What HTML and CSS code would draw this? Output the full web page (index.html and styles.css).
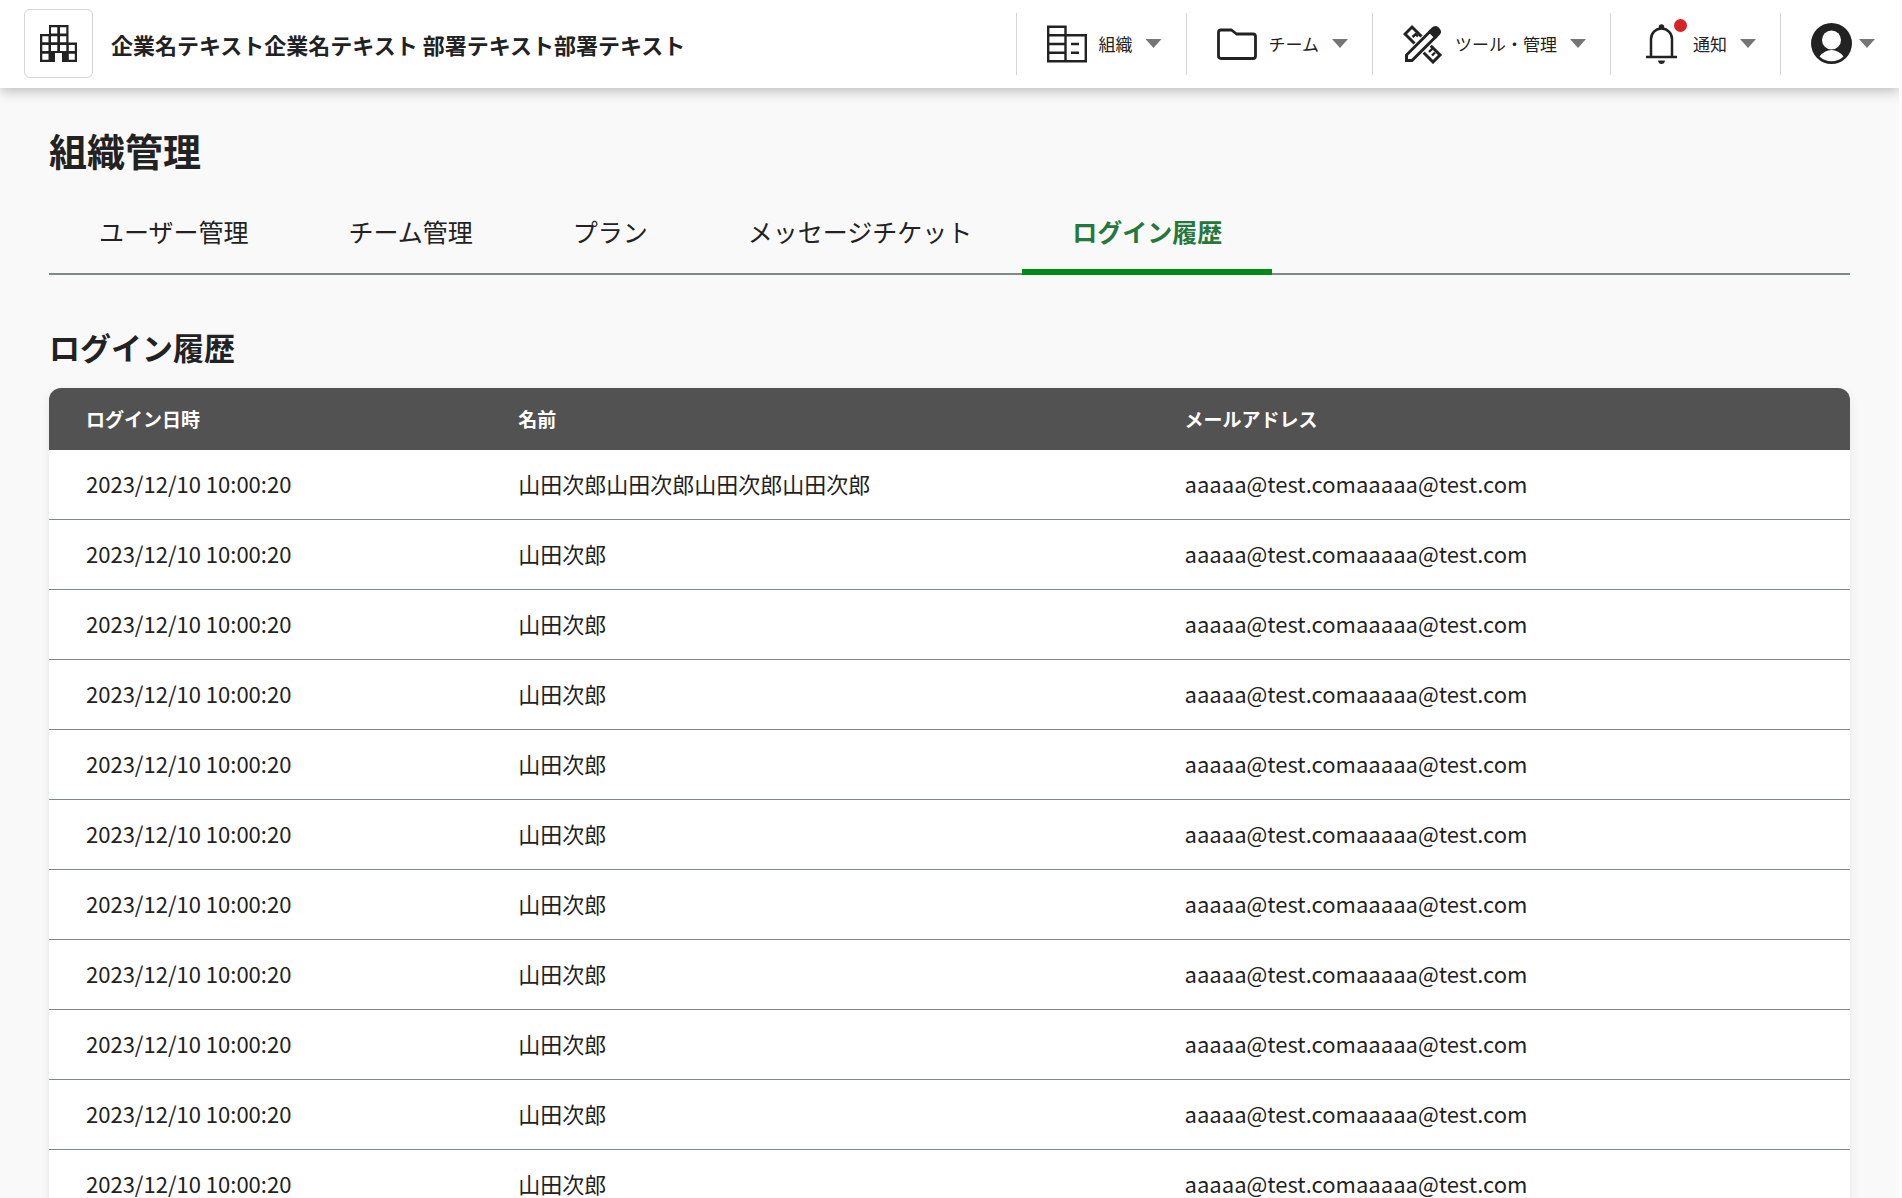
FILE: index.html
```html
<!DOCTYPE html>
<html lang="ja">
<head>
<meta charset="utf-8">
<meta name="viewport" content="width=device-width, initial-scale=1">
<title>組織管理 - ログイン履歴</title>
<link rel="stylesheet" href="styles.css">
</head>
<body>
<div class="page">
  <header class="header">
    <a class="logo" href="#" aria-label="ホーム">
      <svg width="37" height="37" viewBox="0 0 37 37" aria-hidden="true"><path fill="#222" fill-rule="evenodd" d="M9 0H28.5V17.5H37V37H22V28H15V37H0V9H9ZM11 2.3V8.5H17.3V2.3ZM20 2.3V8.5H26.3V2.3ZM2.3 11.2V17.3H8.5V11.2ZM11 11.2V17.3H17.3V11.2ZM20 11.2V17.3H26.3V11.2ZM2.3 20V26H8.5V20ZM11 20V26H17.3V20ZM20 20V26H26.3V20ZM28.8 20V26H34.8V20ZM2.3 28.7V34.7H8.5V28.7ZM28.8 28.7V34.7H34.8V28.7Z"/></svg>
    </a>
    <p class="company">企業名テキスト企業名テキスト 部署テキスト部署テキスト</p>
    <nav class="nav" aria-label="メインメニュー">
      <button class="nav-item" type="button">
        <svg class="nav-icon" viewBox="0 0 40 40" aria-hidden="true"><g fill="none" stroke="#222" stroke-width="2.4"><path d="M1.2 2.7H18.5V37.3H1.2ZM18.5 11.3H38.8V37.3H18.5M1.2 11.3H18.5M1.2 20H18.5M1.2 28.7H18.5M24 20H32M24 28.7H32"/></g></svg>
        <span class="nav-label">組織</span>
        <span class="caret"></span>
      </button>
      <button class="nav-item" type="button">
        <svg class="nav-icon" viewBox="0 0 40 40" aria-hidden="true"><path fill="none" stroke="#222" stroke-width="2.8" stroke-linejoin="round" d="M4 6H14.500L19.500 10H36Q38.500 10 38.500 12.500V32Q38.500 34.500 36 34.500H4Q1.500 34.500 1.500 32V8.500Q1.500 6 4 6Z"/></svg>
        <span class="nav-label">チーム</span>
        <span class="caret"></span>
      </button>
      <button class="nav-item" type="button">
        <svg class="nav-icon" viewBox="0 0 40 40" aria-hidden="true"><g stroke="#222" stroke-width="3"><path fill="#fff" d="M9 3L37 31L30 38L2 10Z"/><path fill="none" stroke-width="2.400" d="M9.500 13L13.500 9.500M12 9.500L15 12.500M26 28L30 24M29 31.500L32 28.500"/><path fill="#fff" stroke="#fff" stroke-width="5" d="M3.500 36.500V31L29 5.500L35 11L9 36.500Z"/><path fill="#fff" d="M3.500 36.500V31L27 7.500L32.500 13L9 36.500Z"/><path fill="#222" stroke-linejoin="round" d="M27 7.500L30 4.500Q32 2.500 34.500 4.500L35.500 5.500Q37.500 8 35.500 10L32.500 13Z"/></g></svg>
        <span class="nav-label">ツール・管理</span>
        <span class="caret"></span>
      </button>
      <button class="nav-item" type="button">
        <span class="bell">
          <svg class="nav-icon" viewBox="0 0 40 40" aria-hidden="true"><path fill="none" stroke="#222" stroke-width="2.500" d="M5 33H36M10 33V15A10.500 10.500 0 0 1 31 15V33"/><path fill="#222" d="M17.800 5V3A2.700 2.700 0 0 1 23.200 3V5ZM17 36.500H24Q23.500 40 20.500 40Q17.500 40 17 36.500Z"/></svg>
          <span class="badge"></span>
        </span>
        <span class="nav-label">通知</span>
        <span class="caret"></span>
      </button>
      <button class="nav-item nav-item-account" type="button" aria-label="アカウント">
        <svg class="account-icon" viewBox="0 0 41 41" aria-hidden="true"><circle cx="20.500" cy="20.500" r="20.500" fill="#222"/><circle cx="20.500" cy="17" r="9.500" fill="#fff"/><path fill="#fff" d="M8.500 33.500Q13.500 27 20.500 27T32.500 33.500Q27.500 38.200 20.500 38.200T8.500 33.500Z"/></svg>
        <span class="caret"></span>
      </button>
    </nav>
  </header>

  <main class="main">
    <h1 class="page-title">組織管理</h1>
    <nav class="tabs" aria-label="組織管理メニュー">
      <a class="tab" href="#">ユーザー管理</a>
      <a class="tab" href="#">チーム管理</a>
      <a class="tab" href="#">プラン</a>
      <a class="tab" href="#">メッセージチケット</a>
      <a class="tab tab-active" href="#" aria-current="page">ログイン履歴</a>
    </nav>

    <h2 class="section-title">ログイン履歴</h2>
    <table class="history">
      <thead>
        <tr><th class="col-date" scope="col">ログイン日時</th><th class="col-name" scope="col">名前</th><th scope="col">メールアドレス</th></tr>
      </thead>
      <tbody>
        <tr><td>2023/12/10 10:00:20</td><td>山田次郎山田次郎山田次郎山田次郎</td><td>aaaaa@test.comaaaaa@test.com</td></tr>
        <tr><td>2023/12/10 10:00:20</td><td>山田次郎</td><td>aaaaa@test.comaaaaa@test.com</td></tr>
        <tr><td>2023/12/10 10:00:20</td><td>山田次郎</td><td>aaaaa@test.comaaaaa@test.com</td></tr>
        <tr><td>2023/12/10 10:00:20</td><td>山田次郎</td><td>aaaaa@test.comaaaaa@test.com</td></tr>
        <tr><td>2023/12/10 10:00:20</td><td>山田次郎</td><td>aaaaa@test.comaaaaa@test.com</td></tr>
        <tr><td>2023/12/10 10:00:20</td><td>山田次郎</td><td>aaaaa@test.comaaaaa@test.com</td></tr>
        <tr><td>2023/12/10 10:00:20</td><td>山田次郎</td><td>aaaaa@test.comaaaaa@test.com</td></tr>
        <tr><td>2023/12/10 10:00:20</td><td>山田次郎</td><td>aaaaa@test.comaaaaa@test.com</td></tr>
        <tr><td>2023/12/10 10:00:20</td><td>山田次郎</td><td>aaaaa@test.comaaaaa@test.com</td></tr>
        <tr><td>2023/12/10 10:00:20</td><td>山田次郎</td><td>aaaaa@test.comaaaaa@test.com</td></tr>
        <tr><td>2023/12/10 10:00:20</td><td>山田次郎</td><td>aaaaa@test.comaaaaa@test.com</td></tr>
      </tbody>
    </table>
  </main>
</div>
</body>
</html>
```

FILE: styles.css
```css
* {
  box-sizing: border-box;
}

html {
  background: #fcfcfc;
  scrollbar-width: none;
}

body {
  margin: 0 3px 0 0;
  color: #222;
  font-family: "Noto Sans CJK JP", sans-serif;
}

.page {
  overflow: hidden;
  background: #f9f9f9;
}

/* Header */
.header {
  display: flex;
  align-items: center;
  height: 88px;
  padding: 0 0 1px 24px;
  background: #fff;
  box-shadow: 0 3px 12px rgba(0, 0, 0, 0.25);
}

.logo {
  display: flex;
  align-items: center;
  justify-content: center;
  width: 69px;
  height: 69px;
  border: 1px solid #d6d6d6;
  border-radius: 6px;
}

.company {
  margin: 0 0 0 18px;
  font-size: 22px;
  font-weight: 700;
  line-height: 32px;
}

.nav {
  display: flex;
  margin-left: auto;
}

.nav-item {
  display: flex;
  align-items: center;
  height: 62px;
  padding: 0 24px 0 30px;
  border: 0;
  border-left: 1px solid #d6d6d6;
  background: none;
  color: inherit;
  font: inherit;
  cursor: pointer;
}

.nav-icon {
  display: block;
  width: 40px;
  height: 40px;
}

.nav-label {
  margin: 0 13px 0 12px;
  font-size: 17px;
  line-height: 24px;
}

.caret {
  width: 16px;
  height: 9px;
  background: #757575;
  clip-path: polygon(0 0, 100% 0, 50% 100%);
}

.bell {
  position: relative;
}

.badge {
  position: absolute;
  top: -5px;
  right: -6px;
  width: 13px;
  height: 13px;
  border-radius: 50%;
  background: #d92323;
}

.account-icon {
  width: 41px;
  height: 41px;
  margin-right: 7px;
}

/* Content */
.main {
  padding: 34px 49px 64px;
}

.page-title {
  margin: 0;
  font-size: 38px;
  line-height: 56px;
}

.tabs {
  display: flex;
  margin-top: 20px;
  background: linear-gradient(#7f8a83, #7f8a83) bottom / 100% 2px no-repeat;
}

.tab {
  padding: 15px 50px 20px;
  border-bottom: 6px solid transparent;
  color: inherit;
  font-size: 25px;
  line-height: 36px;
  text-decoration: none;
}

.tab-active {
  border-color: #008a17;
  color: #24783b;
  font-weight: 700;
}

.section-title {
  margin: 48px 0 17px;
  font-size: 31px;
  line-height: 48px;
}

.history {
  width: 100%;
  border-spacing: 0;
  border-radius: 12px;
  overflow: hidden;
  background: #fff;
  box-shadow: 0 4px 12px rgba(0, 0, 0, 0.08);
  table-layout: fixed;
}

.history th,
.history td {
  padding: 0 37px;
  text-align: left;
}

.history th {
  height: 62px;
  background: #525252;
  color: #fff;
  font-size: 19px;
  line-height: 28px;
}

.history td {
  height: 70px;
  padding-bottom: 3px;
  border-bottom: 1px solid #7f8a87;
  font-size: 22px;
  line-height: 32px;
}

.col-date {
  width: 24%;
}

.col-name {
  width: 37%;
}
```
